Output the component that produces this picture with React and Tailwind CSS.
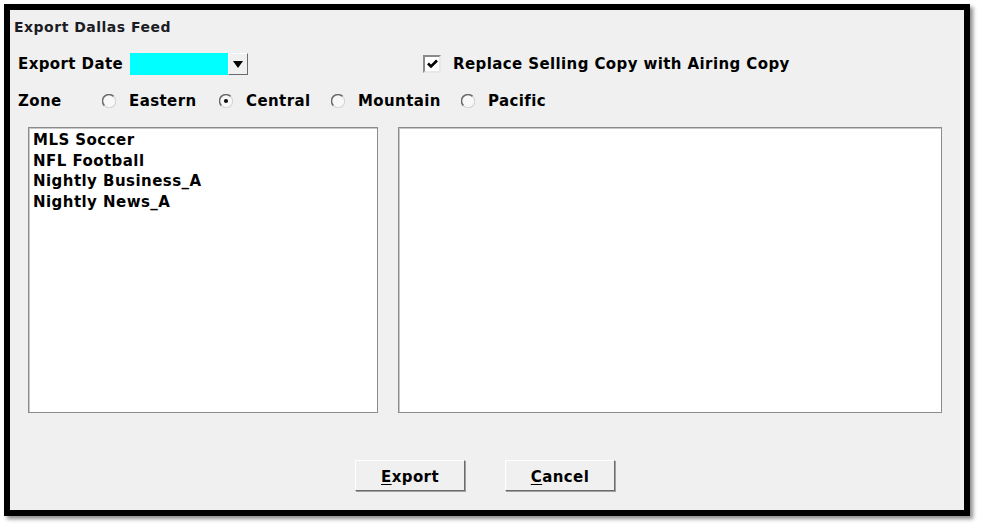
const items = ['MLS Soccer', 'NFL Football', 'Nightly Business_A', 'Nightly News_A'];

const zones = [
    { label: 'Eastern', w: 'w-[117px]' },
    { label: 'Central', w: 'w-[112px]', checked: true },
    { label: 'Mountain', w: 'w-[130px]' },
    { label: 'Pacific', w: 'w-[100px]' }
];

function Radio({ checked }) {
    return (
        <svg width="14" height="14" viewBox="0 0 14 14" className="shrink-0">
            <circle cx="7" cy="7" r="6.2" fill="#f8f8f8" />
            <path d="M2.4 11.6 A6.5 6.5 0 0 1 11.6 2.4" fill="none" stroke="#6a6a6a" strokeWidth="1.5" />
            <path d="M11.8 2.6 A6.5 6.5 0 0 1 2.6 11.8" fill="none" stroke="#d4d4d4" strokeWidth="1.1" />
            {checked && <circle cx="7" cy="7" r="2.1" fill="#111" />}
        </svg>
    );
}

function Button({ label, rest }) {
    return (
        <button className="w-[110px] h-[31px] pt-[3px] bg-[#f0f0f0] border border-t-white border-l-white border-r-[#6b6b6b] border-b-[#6b6b6b] shadow-[1px_1px_0_#a0a0a0] text-[15px] tracking-[0.4px] font-bold text-black flex items-center justify-center">
            <span className="underline underline-offset-2 decoration-1">{label}</span>
            <span>{rest}</span>
        </button>
    );
}

export default function App() {
    return (
        <div className="w-[982px] h-[529px] bg-white font-['DejaVu_Sans',sans-serif] text-black">
            <div className="ml-[4px] mt-[4px] w-[966px] h-[512px] border-[6px] border-black bg-[#f0f0f0] shadow-[3px_3px_4px_rgba(0,0,0,0.45)] flex flex-col">
                {/* Title */}
                <div className="pl-[4px] pt-[9px] text-[14px] tracking-[0.5px] leading-[16px] font-bold text-[#1c1c24]">Export Dallas Feed</div>

                {/* Date + checkbox */}
                <div className="mt-[18px] pl-[8px] h-[22px] flex items-center text-[15px] tracking-[0.4px] font-bold">
                    <span className="w-[112px]">Export Date</span>
                    <div className="w-[98px] h-[22px] bg-[#00ffff]"></div>
                    <div className="w-[20px] h-[22px] bg-[#f0f0f0] border border-t-white border-l-white border-r-[#6b6b6b] border-b-[#6b6b6b] flex items-center justify-center">
                        <svg width="10" height="7" viewBox="0 0 10 7"><path d="M0 0 H10 L5 7 Z" fill="#000" /></svg>
                    </div>
                    <div className="ml-[175px] w-[18px] h-[18px] bg-white border-2 border-t-[#8a8a8a] border-l-[#8a8a8a] border-r-[#e8e8e8] border-b-[#e8e8e8] flex items-center justify-center">
                        <svg width="11" height="10" viewBox="0 0 11 10"><path d="M1 4.5 L4 7.5 L10 1.5" fill="none" stroke="#000" strokeWidth="2.6" /></svg>
                    </div>
                    <span className="ml-[12px]">Replace Selling Copy with Airing Copy</span>
                </div>

                {/* Zone */}
                <div className="mt-[17px] pl-[8px] h-[18px] flex items-center text-[15px] tracking-[0.4px] font-bold">
                    <span className="w-[84px]">Zone</span>
                    {zones.map((z) => (
                        <div key={z.label} className={`${z.w} flex items-center gap-[13px]`}>
                            <Radio checked={z.checked} />
                            <span>{z.label}</span>
                        </div>
                    ))}
                </div>

                {/* Lists */}
                <div className="mt-[17px] pl-[18px] flex gap-[20px]">
                    <div className="w-[350px] h-[286px] bg-white border border-[#8c8c8c] shadow-[inset_1px_1px_0_#c8c8c8] px-[4px] pt-[2px] text-[15px] tracking-[0.45px] font-bold leading-[20.5px]">
                        {items.map((it) => (
                            <div key={it}>{it}</div>
                        ))}
                    </div>
                    <div className="w-[544px] h-[286px] bg-white border border-[#8c8c8c] shadow-[inset_1px_1px_0_#c8c8c8]"></div>
                </div>

                {/* Buttons */}
                <div className="mt-[47px] pl-[345px] flex gap-[40px]">
                    <Button label="E" rest="xport" />
                    <Button label="C" rest="ancel" />
                </div>
            </div>
        </div>
    );
}
